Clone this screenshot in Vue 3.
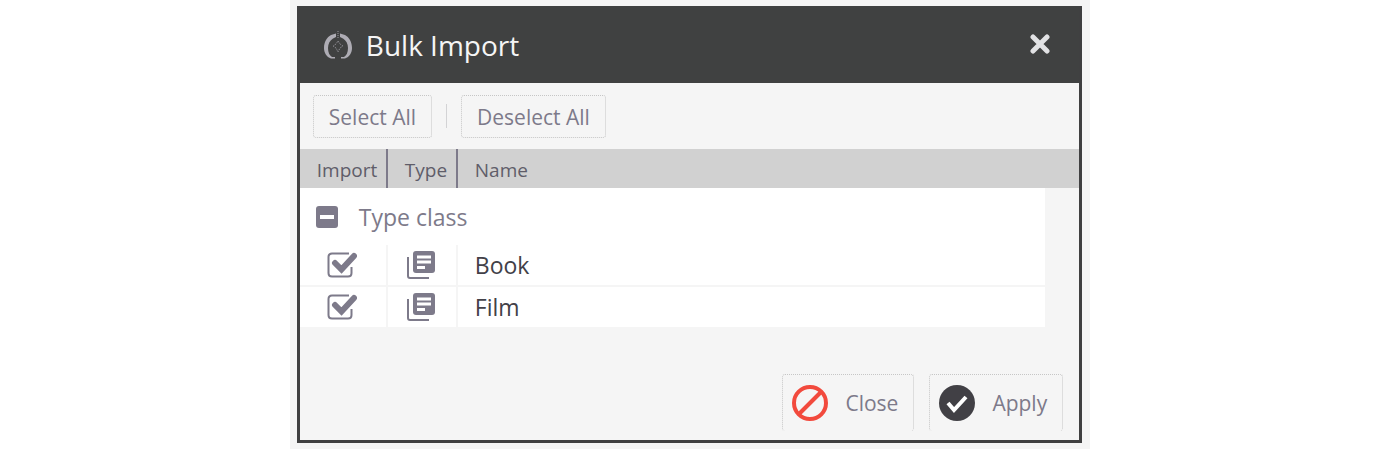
<script setup>
import { ref } from 'vue'

const open = ref(true)
const items = ref([
  { id: 'book', name: 'Book', selected: true },
  { id: 'film', name: 'Film', selected: true },
])

function setAll(value) {
  items.value.forEach((item) => {
    item.selected = value
  })
}
</script>

<template>
  <main class="backdrop">
    <section class="dialog" role="dialog" aria-labelledby="dialog-title">
      <header class="titlebar">
        <svg class="logo" viewBox="0 0 28 28" aria-hidden="true">
          <path d="M7 4l5-1.500V6L9 7.500C6 9.500 4 12.500 4 17c0 4.500 1.500 7.500 4 9h3v1.500H7C2.500 26 0 22 0 17 0 11 3 6 7 4z" />
          <path d="M21 4l-5-1.500V6l3 1.500c3 2 5 5 5 9.500 0 4.500-1.500 7.500-4 9h-3v1.500h4c4.500-1.500 7-5.500 7-10.500C28 11 25 6 21 4z" />
          <path class="spark" d="M14 0v8M14 10l2 3 3 2-3 2-2 4-2-4-3-2 3-2z" />
        </svg>
        <h1 id="dialog-title">Bulk Import</h1>
        <button class="dismiss" type="button" aria-label="Close dialog">
          <svg viewBox="0 0 20 20" aria-hidden="true"><path d="M3 3l14 14M17 3L3 17" /></svg>
        </button>
      </header>

      <div class="toolbar">
        <button class="btn" type="button" @click="setAll(true)">Select All</button>
        <span class="divider"></span>
        <button class="btn" type="button" @click="setAll(false)">Deselect All</button>
      </div>

      <table class="grid">
        <colgroup>
          <col class="col-import" />
          <col class="col-type" />
          <col />
          <col class="col-gutter" />
        </colgroup>
        <thead>
          <tr>
            <th scope="col">Import</th>
            <th scope="col">Type</th>
            <th scope="col">Name</th>
            <td></td>
          </tr>
        </thead>
        <tbody>
          <tr class="group">
            <th colspan="3" scope="rowgroup">
              <button class="toggle" type="button" :aria-expanded="open" @click="open = !open">
                <svg viewBox="0 0 22 22" aria-hidden="true">
                  <rect width="22" height="22" rx="3" />
                  <rect class="minus" x="4" y="9" width="14" height="4" />
                </svg>
                <span>Type class</span>
              </button>
            </th>
            <td></td>
          </tr>
          <template v-if="open">
            <tr v-for="item in items" :key="item.id" class="item">
              <td>
                <label class="check">
                  <input v-model="item.selected" type="checkbox" :aria-label="`Import ${item.name}`" />
                  <svg viewBox="0 0 30 26" aria-hidden="true">
                    <path class="box" d="M22 1.500H5Q1.500 1.500 1.500 5v16q0 3.500 3.500 3.500h16q3.500 0 3.500-3.500v-6" />
                    <path v-if="item.selected" class="tick" d="M8 11l6.500 6.500L27 4" />
                  </svg>
                </label>
              </td>
              <td>
                <svg class="type" viewBox="0 0 28 28" aria-hidden="true">
                  <path class="sheet" d="M1 6v19q0 2 2 2h19" />
                  <rect x="6" y="0" width="22" height="22" rx="3" />
                  <path class="lines" d="M10 6h14M10 11h14M10 16.500h8" />
                </svg>
              </td>
              <td>{{ item.name }}</td>
              <td></td>
            </tr>
          </template>
        </tbody>
      </table>

      <footer class="actions">
        <button class="btn action" type="button">
          <svg class="cancel" viewBox="0 0 36 36" aria-hidden="true">
            <circle cx="18" cy="18" r="16" /><path d="M7 29L29 7" />
          </svg>
          Close
        </button>
        <button class="btn action" type="button">
          <svg class="confirm" viewBox="0 0 36 36" aria-hidden="true">
            <circle cx="18" cy="18" r="18" /><path d="M9 18l6 7L27 12" />
          </svg>
          Apply
        </button>
      </footer>
    </section>
  </main>
</template>

<style>
body {
  background: #fff;
}
</style>

<style scoped>
* {
  box-sizing: border-box;
}

.backdrop {
  width: 58%;
  min-height: 100vh;
  margin: 0 auto;
  padding: 6px 8px 6px 7px;
  display: flex;
  background: #f5f5f5;
  color: #7d7a8a;
  font-family: "Open Sans", "Noto Sans", sans-serif;
}

.dialog {
  flex: 1;
  display: flex;
  flex-direction: column;
  border: 3px solid #404041;
  border-top: 0;
  background: #f5f5f5;
}

button {
  margin: 0;
  border: 0;
  background: none;
  color: inherit;
  font-family: inherit;
  cursor: pointer;
}

.titlebar {
  display: flex;
  align-items: center;
  height: 77px;
  padding: 0 29px 0 24px;
  background: #404141;
  color: #f5f5f5;
}

.logo {
  width: 28px;
  height: 28px;
  fill: #aeacb4;
}

.spark {
  fill: none;
  stroke: #9a98a0;
  stroke-width: 1;
  stroke-dasharray: 1 1;
}

h1 {
  flex: 1;
  margin: 0 0 0 14px;
  font-size: 28px;
  line-height: 40px;
  font-weight: 400;
}

.dismiss {
  display: flex;
  padding: 0 0 2px;
}

.dismiss svg {
  width: 20px;
  height: 20px;
  stroke: #e2e2e4;
  stroke-width: 5;
  stroke-linecap: round;
}

.toolbar {
  display: flex;
  align-items: center;
  gap: 14px;
  height: 66px;
  padding: 0 13px;
}

.btn {
  height: 43px;
  padding: 2px 15px 0;
  border: 1px dotted #c6c6c6;
  border-radius: 3px;
  font-size: 21px;
  line-height: 30px;
}

.divider {
  width: 1px;
  height: 24px;
  background: #d3d3d5;
}

.grid {
  width: 100%;
  table-layout: fixed;
  border-collapse: separate;
  border-spacing: 0;
}

.col-import {
  width: 88px;
}

.col-type {
  width: 70px;
}

.col-gutter {
  width: 34px;
}

th,
td {
  padding: 0;
  text-align: left;
  font-weight: 400;
}

thead th,
thead td {
  height: 39px;
  padding: 3px 0 0 17px;
  background: #d1d1d1;
  color: #5f5d69;
  font-size: 19px;
  line-height: 28px;
}

thead th:nth-child(-n + 2) {
  border-right: 2px solid #7d7a8a;
}

.group th {
  height: 57px;
  padding: 1px 0 0 16px;
  background: #fff;
}

.toggle {
  display: flex;
  align-items: center;
  gap: 21px;
  padding: 0;
  font-size: 23px;
  line-height: 30px;
}

.toggle svg {
  width: 22px;
  height: 22px;
  fill: #7d7a8a;
}

.toggle .minus {
  fill: #fff;
}

.item td {
  height: 42px;
  border-bottom: 2px solid #f5f5f5;
  background: #fff;
  color: #424148;
  font-size: 23px;
  line-height: 30px;
}

.item td:nth-child(-n + 2) {
  border-right: 2px solid #f5f5f5;
}

.item td:nth-child(3) {
  padding-left: 17px;
}

.item td:last-child {
  background: #f5f5f5;
}

.check {
  display: grid;
  width: 30px;
  height: 26px;
  margin-left: 27px;
}

.check input,
.check svg {
  grid-area: 1 / 1;
  width: 30px;
  height: 26px;
  margin: 0;
}

.check input {
  appearance: none;
}

.check svg {
  fill: none;
  stroke: #7d7a8a;
  stroke-width: 2;
  pointer-events: none;
}

.check .tick {
  stroke-width: 6;
  stroke-linecap: round;
}

.type {
  display: block;
  width: 28px;
  height: 28px;
  margin-left: 19px;
  fill: #7d7a8a;
}

.type .sheet {
  fill: none;
  stroke: #7d7a8a;
  stroke-width: 2;
}

.type .lines {
  stroke: #fff;
  stroke-width: 3;
}

.actions {
  display: flex;
  justify-content: flex-end;
  gap: 15px;
  margin-top: auto;
  padding: 0 16px 9px;
}

.action {
  display: flex;
  align-items: center;
  gap: 17px;
  height: 57px;
  padding: 0 15px 0 9px;
  border-bottom: 0;
}

.action svg {
  width: 36px;
  height: 36px;
  fill: none;
}

.cancel {
  stroke: #f24a3d;
  stroke-width: 4;
}

.confirm circle {
  fill: #414045;
}

.confirm path {
  stroke: #fff;
  stroke-width: 4;
}
</style>
